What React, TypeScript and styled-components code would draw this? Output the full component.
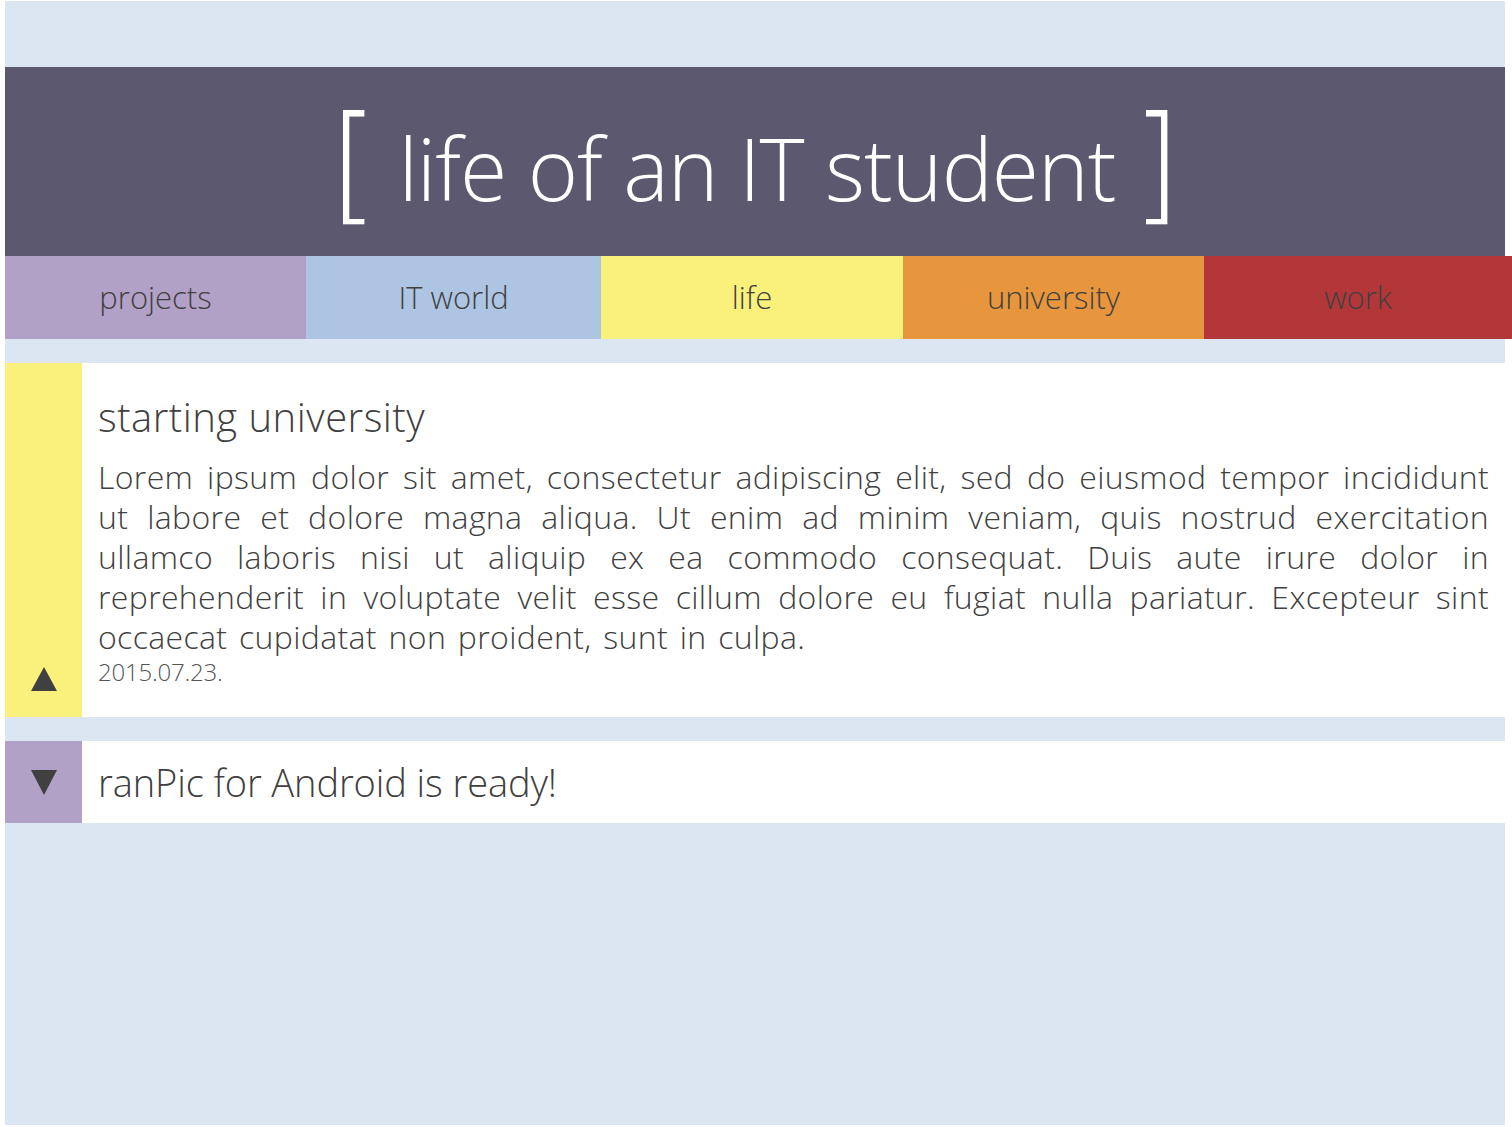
import React from "react";
import styled, { createGlobalStyle } from "styled-components";

const Global = createGlobalStyle`
  html, body { margin: 0; padding: 0; background: #ffffff; }
  body { font-family: "Open Sans", "Segoe UI", sans-serif; font-weight: 300; color: #404040; }
`;

const Page = styled.div`
  margin: 1px 7px 2px 5px;
  height: 1124px;
  background: #dce6f2;
  padding-top: 66px;
  box-sizing: border-box;
`;

const Header = styled.header`
  height: 189px;
  background: #5c586f;
  display: flex;
  align-items: center;
  justify-content: center;
  color: #ffffff;
`;

const Bracket = styled.span`
  font-family: "DejaVu Sans", sans-serif;
  font-weight: 200;
  font-size: 128px;
  line-height: 1;
  margin-top: 4px;
`;

const Title = styled.h1`
  margin: 0 16px 0 20px;
  font-family: "Open Sans", sans-serif;
  font-weight: 300;
  font-size: 86px;
  letter-spacing: -1px;
  line-height: 1;
  padding-top: 12px;
`;

const Nav = styled.nav`
  display: flex;
  height: 83px;
  width: 1507px;
`;

const NavItem = styled.a<{ $bg: string; $w: number }>`
  flex: 0 0 ${(p) => p.$w}px;
  background: ${(p) => p.$bg};
  display: flex;
  align-items: center;
  justify-content: center;
  font-size: 31px;
  color: #404040;
  text-decoration: none;
  padding-bottom: 2px;
  box-sizing: border-box;
`;

const Posts = styled.main`
  padding-top: 24px;
  display: flex;
  flex-direction: column;
  gap: 24px;
`;

const Post = styled.article`
  display: flex;
  background: #ffffff;
`;

const Side = styled.div<{ $bg: string; $end?: boolean }>`
  flex: 0 0 77px;
  background: ${(p) => p.$bg};
  display: flex;
  justify-content: center;
  align-items: ${(p) => (p.$end ? "flex-end" : "center")};
  padding-bottom: ${(p) => (p.$end ? "25px" : "0")};
`;

const Arrow = styled.svg`
  width: 26px;
  height: 26px;
  display: block;
`;

const Body = styled.div<{ $compact?: boolean }>`
  flex: 1;
  padding: ${(p) => (p.$compact ? "17px 16px 17px 16px" : "30px 16px 30px 16px")};
`;

const PostTitle = styled.h2`
  margin: 0 0 16px 0;
  font-weight: 300;
  font-size: 40px;
  line-height: 48px;
  letter-spacing: 0.5px;
`;

const PostTitleOnly = styled(PostTitle)`
  margin: 0;
  font-size: 38px;
  letter-spacing: -0.1px;
`;

const Text = styled.p`
  margin: 0;
  font-size: 32px;
  line-height: 40px;
  text-align: justify;
  letter-spacing: 0.35px;
  word-spacing: 3px;
`;

const DateLine = styled.div`
  font-size: 24px;
  line-height: 30px;
  color: #555;
  letter-spacing: -0.2px;
`;

const Up = () => (
  <Arrow viewBox="0 0 26 26">
    <polygon points="13,1 26,25 0,25" fill="#404040" />
  </Arrow>
);
const Down = () => (
  <Arrow viewBox="0 0 26 26">
    <polygon points="0,1 26,1 13,26" fill="#404040" />
  </Arrow>
);

const navItems = [
  { label: "projects", bg: "#b2a1c7", w: 301 },
  { label: "IT world", bg: "#adc5e2", w: 295 },
  { label: "life", bg: "#faf17c", w: 302 },
  { label: "university", bg: "#e7963e", w: 301 },
  { label: "work", bg: "#b33638", w: 308 },
];

export default function App() {
  return (
    <>
      <Global />
      <Page>
        <Header>
          <Bracket>[</Bracket>
          <Title>life of an IT student</Title>
          <Bracket>]</Bracket>
        </Header>
        <Nav>
          {navItems.map((n) => (
            <NavItem key={n.label} $bg={n.bg} $w={n.w} href="#">
              {n.label}
            </NavItem>
          ))}
        </Nav>
        <Posts>
          <Post>
            <Side $bg="#faf17c" $end>
              <Up />
            </Side>
            <Body>
              <PostTitle>starting university</PostTitle>
              <Text>
                Lorem ipsum dolor sit amet, consectetur adipiscing elit, sed do eiusmod tempor incididunt ut labore et
                dolore magna aliqua. Ut enim ad minim veniam, quis nostrud exercitation ullamco laboris nisi ut aliquip
                ex ea commodo consequat. Duis aute irure dolor in reprehenderit in voluptate velit esse cillum dolore
                eu fugiat nulla pariatur. Excepteur sint occaecat cupidatat non proident, sunt in culpa.
              </Text>
              <DateLine>2015.07.23.</DateLine>
            </Body>
          </Post>
          <Post>
            <Side $bg="#b2a1c7">
              <Down />
            </Side>
            <Body $compact>
              <PostTitleOnly>ranPic for Android is ready!</PostTitleOnly>
            </Body>
          </Post>
        </Posts>
      </Page>
    </>
  );
}
